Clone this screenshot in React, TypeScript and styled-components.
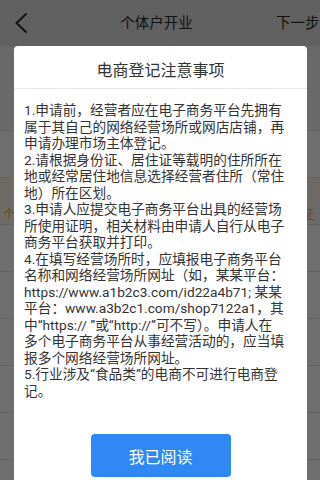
import React from 'react';
import styled, { createGlobalStyle } from 'styled-components';

const GlobalStyle = createGlobalStyle`
  html, body {
    margin: 0;
    padding: 0;
    height: 100%;
    overflow: hidden;
  }

  body {
    font-family: Roboto, "Noto Sans CJK SC", sans-serif;
    background: #f4f4f4;
  }
`;

const rowsAbove = ['name'];
const rowsBelow = ['phone', 'address', 'scope', 'form', 'staff', 'capital'];

const notes: string[][] = [
  [
    '1.申请前，经营者应在电子商务平台先拥有',
    '属于其自己的网络经营场所或网店店铺，再',
    '申请办理市场主体登记。',
  ],
  [
    '2.请根据身份证、居住证等载明的住所所在',
    '地或经常居住地信息选择经营者住所（常住',
    '地）所在区划。',
  ],
  [
    '3.申请人应提交电子商务平台出具的经营场',
    '所使用证明，相关材料由申请人自行从电子',
    '商务平台获取并打印。',
  ],
  [
    '4.在填写经营场所时，应填报电子商务平台',
    '名称和网络经营场所网址（如，某某平台：',
    'https://www.a1b2c3.com/id22a4b71; 某某',
    '平台：www.a3b2c1.com/shop7122a1，其',
    '中“https:// ”或“http://”可不写）。申请人在',
    '多个电子商务平台从事经营活动的，应当填',
    '报多个网络经营场所网址。',
  ],
  [
    '5.行业涉及“食品类”的电商不可进行电商登',
    '记。',
  ],
];

const BackIcon: React.FC = () => (
  <svg width="14" height="22" viewBox="0 0 14 22" fill="none">
    <path d="M12 2 L2.5 11 L12 20" stroke="#2b2b2b" strokeWidth="2" strokeLinecap="round" strokeLinejoin="round" />
  </svg>
);

const App: React.FC = () => (
  <Screen>
    <GlobalStyle />
    <TopBar>
      <BackButton>
        <BackIcon />
      </BackButton>
      <PageTitle>个体户开业</PageTitle>
      <NextButton>下一步</NextButton>
    </TopBar>
    <FormList>
      <TipBlock />
      {rowsAbove.map((row) => (
        <FormRow key={row} />
      ))}
      <NoticeRow>
        <span>个</span>
        <span>证</span>
      </NoticeRow>
      {rowsBelow.map((row) => (
        <FormRow key={row} />
      ))}
    </FormList>

    <Mask />

    <Dialog>
      <DialogTitle>电商登记注意事项</DialogTitle>
      <DialogBody>
        {notes.map((item, idx) => (
          <NoteItem key={`note-${idx}`}>
            {item.map((line, lineIdx) => (
              <React.Fragment key={`line-${idx}-${lineIdx}`}>
                {lineIdx > 0 && <br />}
                {line}
              </React.Fragment>
            ))}
          </NoteItem>
        ))}
      </DialogBody>
      <ReadButton>我已阅读</ReadButton>
    </Dialog>
  </Screen>
);

export default App;

const Screen = styled.div`
  position: relative;
  height: 100vh;
  overflow: hidden;
  background: #f4f4f4;
`;

const TopBar = styled.header`
  display: flex;
  align-items: center;
  height: 46px;
  padding: 0 0 0 14px;
  background: #e2e2e2;
  color: #2b2b2b;
`;

const BackButton = styled.div`
  display: flex;
  align-items: center;
  width: 40px;
  margin-top: -1px;
`;

const PageTitle = styled.div`
  flex: 1;
  text-align: center;
  font-size: 14.5px;
  padding-right: 17px;
  margin-top: -4px;
`;

const NextButton = styled.div`
  width: 44px;
  font-size: 14.5px;
  margin-top: -4px;
  white-space: nowrap;
`;

const FormList = styled.div`
  display: flex;
  flex-direction: column;
  background: #fff;
`;

const TipBlock = styled.div`
  height: 84px;
  background: #f4f4f4;
  border-bottom: 1px solid #e4e4e4;
`;

const FormRow = styled.div`
  height: 46px;
  border-bottom: 1px solid #e4e4e4;
`;

const NoticeRow = styled.div`
  display: flex;
  align-items: flex-end;
  justify-content: space-between;
  height: 47px;
  box-sizing: border-box;
  padding: 0 6px 2px 3px;
  font-size: 12px;
  color: #f5a43c;
  background: #fff8ec;
  border-bottom: 1px solid #e4e4e4;
`;

const Mask = styled.div`
  position: fixed;
  inset: 0;
  background: rgba(0, 0, 0, 0.57);
`;

const Dialog = styled.div`
  position: absolute;
  top: 46px;
  left: 14px;
  right: 13px;
  display: flex;
  flex-direction: column;
  background: #fff;
  border-radius: 4px;
  padding-bottom: 24px;
`;

const DialogTitle = styled.div`
  padding: 16px 0 8px;
  line-height: 18px;
  font-size: 16px;
  text-align: center;
  color: #333;
  border-bottom: 1px solid #e8e8e8;
`;

const DialogBody = styled.div`
  display: flex;
  flex-direction: column;
  padding: 13px 10px 0;
  color: #333;
  font-size: 13.7px;
`;

const NoteItem = styled.p`
  margin: 0;
  line-height: 16.5px;
  white-space: nowrap;
`;

const ReadButton = styled.button`
  align-self: center;
  width: 140px;
  height: 43px;
  margin-top: 35px;
  border: none;
  border-radius: 4px;
  background: #2f88f3;
  color: #fff;
  font-family: Roboto, "Noto Sans CJK SC", sans-serif;
  font-size: 16px;
`;
